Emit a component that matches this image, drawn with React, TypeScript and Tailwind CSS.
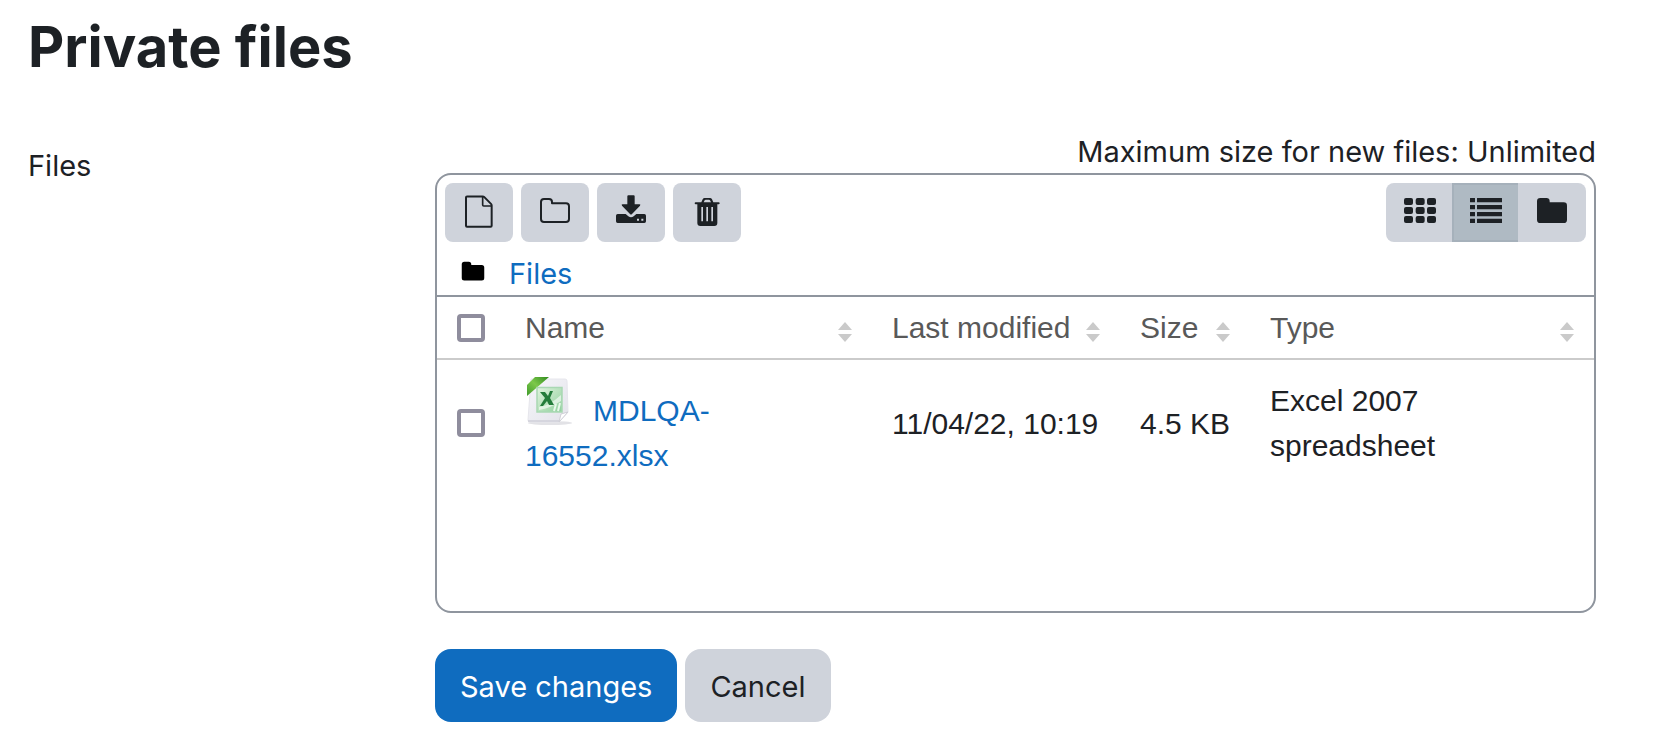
import { useState } from 'react';
import type { ReactNode } from 'react';

function Glyph({ children }: { children: ReactNode }) {
  return (
    <svg viewBox="0 0 96 102" className="h-[34px] w-8" fill="currentColor" aria-hidden="true">
      {children}
    </svg>
  );
}

const FOLDER = 'M3 19q0-10 10-10h18q10 0 10 10v3h42q10 0 10 10v42q0 10-10 10H13q-10 0-10-10z';

function FileIcon() {
  return (
    <Glyph>
      <path d="M12 4.500h47q3 0 5 2l20 20q2 2 2 5v61q0 3-3 3H12q-3 0-3-3v-85q0-3 3-3z" fill="none" stroke="currentColor" strokeWidth="6" strokeLinejoin="round" />
      <path d="M59 5v25q0 3 3 3h24" fill="none" stroke="currentColor" strokeWidth="5" strokeLinejoin="round" />
    </Glyph>
  );
}

function FolderOutlineIcon() {
  return (
    <Glyph>
      <path d="M6 21q0-9 9-9h15q9 0 9 9v4h42q9 0 9 9v38q0 9-9 9H15q-9 0-9-9z" fill="none" stroke="currentColor" strokeWidth="6" strokeLinejoin="round" />
    </Glyph>
  );
}

function DownloadIcon() {
  return (
    <Glyph>
      <path d="M40 1h16q3 0 3 3v24h14q5 0 2 4L51 57q-3 3-6 0L21 32q-3-4 2-4h14V4q0-3 3-3z" />
      <path
        fillRule="evenodd"
        d="M8 57h24l8 7q8 6 16 0l8-7h24q5 0 5 5v17q0 5-5 5H8q-5 0-5-5V62q0-5 5-5zM66 71v6h6v-6zM79 71v6h6v-6z"
      />
    </Glyph>
  );
}

function TrashIcon() {
  return (
    <Glyph>
      <path
        fillRule="evenodd"
        d="M31 22l4-9q2-4 6-4h16q4 0 6 4l4 9h16q3 0 3 3t-3 3h-4v56q0 9-9 9H28q-9 0-9-9V28h-5q-3 0-3-3t3-3zM38 22h22l-3-6q-1-2-3-2H44q-2 0-3 2zM31 36v43h5V36zM46 36v43h5V36zM61 36v43h5V36z"
      />
    </Glyph>
  );
}

function GridIcon() {
  return (
    <Glyph>
      {[9, 36, 63].map((y) =>
        [0, 35, 69].map((x) => <rect key={`${x}-${y}`} x={x} y={y} width="27" height="21" rx="6" />),
      )}
    </Glyph>
  );
}

function ListIcon() {
  return (
    <Glyph>
      {[9, 30, 51, 71].map((y) => (
        <g key={y}>
          <rect x="0" y={y} width="15" height="13" rx="1" />
          <rect x="21" y={y} width="75" height="13" rx="1" />
        </g>
      ))}
    </Glyph>
  );
}

function FolderIcon() {
  return (
    <Glyph>
      <path d={FOLDER} />
    </Glyph>
  );
}

function SheetIcon() {
  return (
    <svg viewBox="-2 0 48 48" className="mr-5 inline-block size-12 align-[-4px]" aria-hidden="true">
      <defs>
        <linearGradient id="paper" x1="0" y1="0" x2="1" y2="1">
          <stop offset="0" stopColor="#f6f6fa" />
          <stop offset="1" stopColor="#e3e3ea" />
        </linearGradient>
        <linearGradient id="ribbon" x1="0" y1="1" x2="1" y2="0">
          <stop offset="0" stopColor="#3f9a2b" />
          <stop offset="0.5" stopColor="#7cc84a" />
          <stop offset="1" stopColor="#2f8a1e" />
        </linearGradient>
        <linearGradient id="sheet" x1="0" y1="0" x2="1" y2="1">
          <stop offset="0" stopColor="#e2f4df" />
          <stop offset="1" stopColor="#8fd09c" />
        </linearGradient>
      </defs>
      <ellipse cx="23" cy="46" rx="22" ry="2" fill="#e2e2e6" />
      <path d="M4 2h34q2 0 2 2l1 31-9 10H3q-2 0-2-2z" fill="url(#paper)" stroke="#e6e6ec" strokeWidth="1" />
      <path d="M32 45l2-8 7-2z" fill="#fff" stroke="#cfcfd6" strokeWidth="1" />
      <path d="M1 44h31" stroke="#cfcfd8" strokeWidth="1.5" />
      <path d="M8 0h14L0 19V8z" fill="url(#ribbon)" />
      <rect x="10" y="10.500" width="25" height="24.500" fill="url(#sheet)" stroke="#a9d8b3" strokeWidth="1.500" />
      <path d="M12 30q10-1 22-12v6Q24 31 12 33z" fill="#fff" opacity=".6" />
      <path d="M27 34l2-7M31 34l2-8" stroke="#e9f8ec" strokeWidth="2" />
      <path d="M13 15h5l3 4 2-5h3l-3 7 4 7h-5l-2-4-4 5h-3l5-8z" fill="#247c3b" />
    </svg>
  );
}

function Sorter() {
  return (
    <svg viewBox="0 0 14 20" className="mt-2 h-5 w-3.5 shrink-0" fill="#cacaca" aria-hidden="true">
      <path d="M7 0l7 8H0z" />
      <path d="M0 12h14l-7 8z" />
    </svg>
  );
}

function ToolButton({ label, children }: { label: string; children: ReactNode }) {
  return (
    <button type="button" aria-label={label} className="flex h-[59px] w-[68px] items-center justify-center rounded-lg bg-[#cfd3db] pb-0.5">
      {children}
    </button>
  );
}

function HeaderCell({ children }: { children: ReactNode }) {
  return (
    <th scope="col" className="px-5 py-2 text-left font-normal">
      <button type="button" className="flex w-full items-center justify-between whitespace-nowrap">
        {children}
        <Sorter />
      </button>
    </th>
  );
}

function Tick({ label }: { label: string }) {
  return (
    <input
      type="checkbox"
      aria-label={label}
      className="block size-7 appearance-none rounded-sm border-4 border-[#8f8d9d] bg-white checked:bg-[#0f6cbf]"
    />
  );
}

const VIEWS = [
  { id: 'icons', label: 'Display folder with file icons', icon: <GridIcon /> },
  { id: 'details', label: 'Display folder with file details', icon: <ListIcon /> },
  { id: 'tree', label: 'Display folder as file tree', icon: <FolderIcon /> },
];

export default function App() {
  const [view, setView] = useState('details');

  return (
    <main className="bg-white pt-[11px] pr-[76px] pb-[21px] pl-7 font-['Inter',sans-serif] text-[29px] leading-[45px] text-[#1d2125]">
      <h1 className="text-[56px] leading-[72px] font-bold">Private files</h1>

      <form className="mt-[46px] grid grid-cols-[1fr_3fr] gap-x-5" onSubmit={(e) => e.preventDefault()}>
        <p className="pt-3.5">Files</p>
        <div className="min-w-0">
          <p className="pt-0.5 text-right leading-[42px]">Maximum size for new files: Unlimited</p>

          <section aria-label="Files" className="overflow-hidden rounded-2xl border-2 border-[#8f959e]">
            <div className="flex justify-between px-2 pt-2">
              <div className="flex gap-2">
                <ToolButton label="Add"><FileIcon /></ToolButton>
                <ToolButton label="Create folder"><FolderOutlineIcon /></ToolButton>
                <ToolButton label="Download all"><DownloadIcon /></ToolButton>
                <ToolButton label="Delete"><TrashIcon /></ToolButton>
              </div>
              <div className="flex overflow-hidden rounded-lg bg-[#cfd3db] pr-0.5">
                {VIEWS.map((v) => (
                  <button
                    key={v.id}
                    type="button"
                    aria-label={v.label}
                    aria-pressed={view === v.id}
                    onClick={() => setView(v.id)}
                    className={
                      view === v.id
                        ? 'flex h-[59px] w-[66px] items-center justify-center border-2 border-r-0 border-[#a6b1bb] bg-[#afbac3] pb-0.5'
                        : 'flex h-[59px] w-[66px] items-center justify-center pb-0.5 pl-0.5'
                    }
                  >
                    {v.icon}
                  </button>
                ))}
              </div>
            </div>

            <nav aria-label="Path" className="flex items-center gap-6 border-b-2 border-[#8f959e] pt-[11px] pl-6 leading-[42px]">
              <svg viewBox="0 6 96 84" className="mb-1.5 h-[21px] w-6 text-black" fill="currentColor" aria-hidden="true">
                <path d={FOLDER} />
              </svg>
              <a href="#files" className="text-[#0f6cbf]">Files</a>
            </nav>

            <div className="min-h-[314px]">
              <table className="w-full table-fixed border-collapse font-['Liberation_Sans',Arial,sans-serif] text-[30px]">
                <colgroup>
                  <col className="w-[68px]" />
                  <col className="w-[367px]" />
                  <col className="w-[248px]" />
                  <col className="w-[130px]" />
                  <col />
                </colgroup>
                <thead>
                  <tr className="border-b-2 border-[#cbcbcb] text-[#595959]">
                    <th scope="col" className="px-5"><Tick label="Select all" /></th>
                    <HeaderCell>Name</HeaderCell>
                    <HeaderCell>Last modified</HeaderCell>
                    <HeaderCell>Size</HeaderCell>
                    <HeaderCell>Type</HeaderCell>
                  </tr>
                </thead>
                <tbody>
                  <tr>
                    <td className="px-5"><Tick label="Select MDLQA-16552.xlsx" /></td>
                    <td className="px-5 pt-[17px] pb-2">
                      <a href="#file" className="block max-w-64 text-[#0f6cbf]">
                        <SheetIcon />
                        MDLQA-16552.xlsx
                      </a>
                    </td>
                    <td className="px-5 whitespace-nowrap">11/04/22, 10:19</td>
                    <td className="px-5 whitespace-nowrap">4.5 KB</td>
                    <td className="px-5"><span className="block max-w-64">Excel 2007 spreadsheet</span></td>
                  </tr>
                </tbody>
              </table>
            </div>
          </section>

          <div className="mt-9 flex gap-2">
            <button type="submit" className="rounded-2xl bg-[#0f6cbf] px-[25px] pt-[15px] pb-[13px] text-white">Save changes</button>
            <button type="button" className="rounded-2xl bg-[#cfd3db] px-[25px] pt-[15px] pb-[13px]">Cancel</button>
          </div>
        </div>
      </form>
    </main>
  );
}
